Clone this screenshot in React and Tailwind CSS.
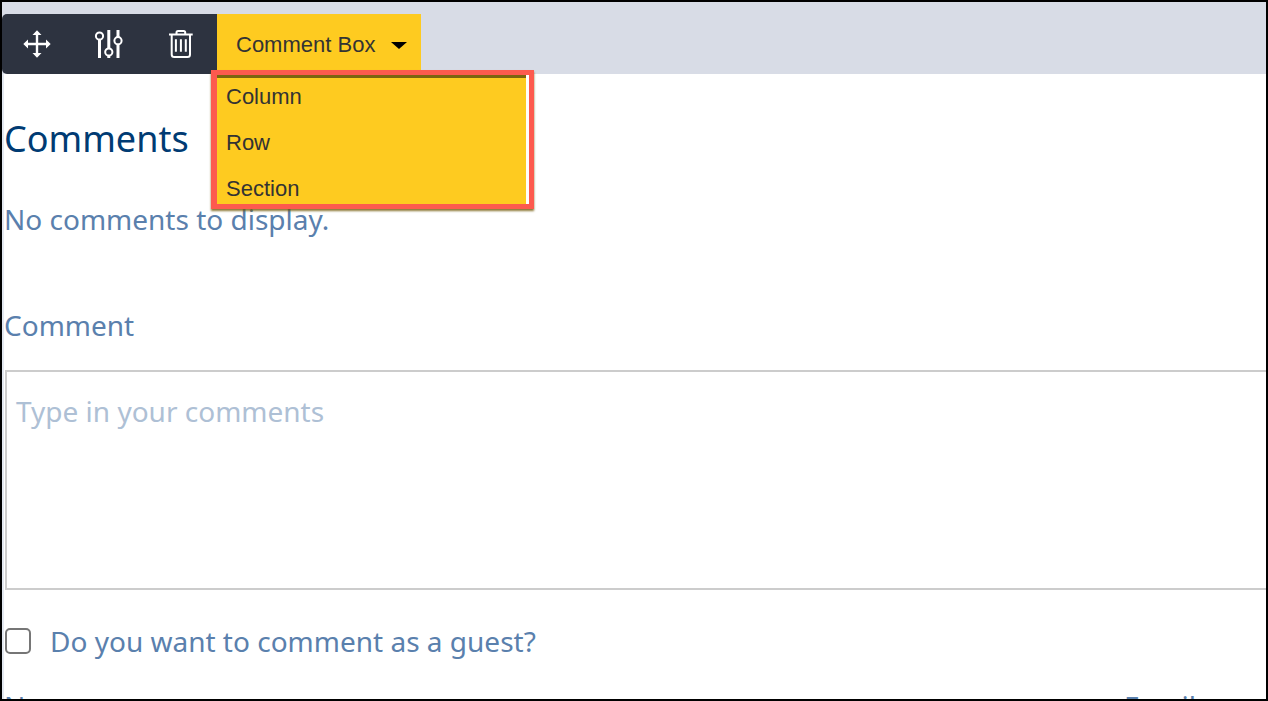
function MoveIcon() {
  return (
    <svg width="30" height="30" viewBox="0 0 30 30" fill="#fff">
      <path d="M15 1.3L19.5 6H16.2V13.8H24V10.5L28.7 15L24 19.5V16.2H16.2V24H19.5L15 28.7L10.5 24H13.8V16.2H6V19.5L1.3 15L6 10.5V13.8H13.8V6H10.5Z" />
    </svg>
  )
}

function SlidersIcon() {
  return (
    <svg width="30" height="30" viewBox="0 0 30 30" fill="none" stroke="#fff" strokeWidth="3">
      <path d="M5.5 11v18M14.8 1v18M14.8 27v2M24 1v7M24 15.5V29" />
      <circle cx="5.5" cy="7" r="3.6" strokeWidth="2" />
      <circle cx="14.8" cy="23" r="3.6" strokeWidth="2" />
      <circle cx="24" cy="11.7" r="3.6" strokeWidth="2" />
    </svg>
  )
}

function TrashIcon() {
  return (
    <svg width="26" height="30" viewBox="0 0 26 30" fill="none" stroke="#fff" strokeWidth="2">
      <path d="M1 5.5h23.7M8.5 5V3.5A1.5 1.5 0 0 1 10 2h5.7a1.5 1.5 0 0 1 1.5 1.5V5" />
      <path d="M3.7 6v19.5a2.5 2.5 0 0 0 2.5 2.5h13.3a2.5 2.5 0 0 0 2.5-2.5V6" />
      <path d="M7.9 10.3v12.4M12.9 10.3v12.4M17.8 10.3v12.4" />
    </svg>
  )
}

export default function App() {
  return (
    <div className="relative w-[1268px] h-[701px] overflow-hidden bg-white border-2 border-black font-['Noto_Sans',sans-serif] text-[#5a80ad]">
      {/* top strip with the toolbar */}
      <div className="flex h-[72px] items-end bg-[#d8dce6]">
        <div className="flex h-[60px] w-[215px] items-center rounded-l-[5px] bg-[#2d3340] pl-[20px]">
          <MoveIcon />
          <div className="ml-[42px]"><SlidersIcon /></div>
          <div className="ml-[44px]"><TrashIcon /></div>
        </div>
        <div className="flex h-[60px] w-[204px] items-center bg-[#fecb20] pl-[19px] font-['Liberation_Sans',sans-serif] text-[22px] text-[#333]">
          <span>Comment Box</span>
          <span className="ml-[16px] mt-[2px] h-0 w-0 border-x-[8px] border-t-[7px] border-x-transparent border-t-black" />
        </div>
      </div>

      {/* dropdown menu */}
      <div className="absolute left-[209px] top-[68px] h-[139px] w-[323px] border-[5px] border-l-[6px] border-[#fd5a4e] bg-white shadow-[0_2px_2px_rgba(110,85,0,0.8)]">
        <div className="flex h-full w-[309px] flex-col gap-[14px] border-t-[3px] border-[#7d6410] bg-[#fecb20] pl-[9px] pt-[2px] font-['Liberation_Sans',sans-serif] text-[22px] text-[#333]">
          <div className="flex h-[32px] items-center">Column</div>
          <div className="flex h-[32px] items-center">Row</div>
          <div className="flex h-[32px] items-center">Section</div>
        </div>
      </div>

      <div className="h-full border-l-2 border-[#e3e8f0]">
        <h1 className="pt-[40px] text-[36px] leading-[50px] text-[#003b73]">Comments</h1>
        <p className="mt-[37px] text-[28px] leading-[36px]">No comments to display.</p>
        <label className="mt-[70px] block text-[28px] leading-[36px]">Comment</label>
        <div className="ml-[1px] mt-[27px] h-[220px] border-2 border-r-0 border-[#cccccc] bg-white pl-[9px] pt-[21px] text-[28px] leading-[36px] text-[#aec0d5]">
          Type in your comments
        </div>
        <div className="ml-[1px] mt-[33px] flex items-center">
          <span className="h-[26px] w-[26px] rounded-[5px] border-2 border-[#767676] bg-white" />
          <span className="ml-[19px] text-[28px] leading-[36px]">Do you want to comment as a guest?</span>
        </div>
        <div className="mt-[29px] flex justify-between pr-[70px] text-[28px] leading-[36px]">
          <span>Name</span>
          <span>Email</span>
        </div>
      </div>
    </div>
  )
}
